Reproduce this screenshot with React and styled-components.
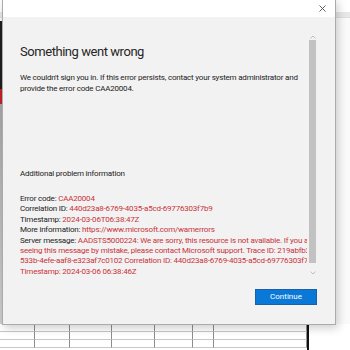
import React from "react";
import styled, { createGlobalStyle } from "styled-components";

const Global = createGlobalStyle`
  html, body { margin: 0; padding: 0; background: #fff; overflow: hidden; }
  * { box-sizing: border-box; }
`;

const Page = styled.div`
  position: relative;
  width: 350px;
  height: 350px;
  overflow: hidden;
  background: #fff;
  font-family: Roboto, "Noto Sans", sans-serif;
`;

const Backdrop = styled.div`
  display: flex;
  flex-direction: column;
  height: 100%;
`;

const Ribbon = styled.div`
  flex: none;
  margin-top: 12px;
  height: 6px;
  background: #e8e8e8;
  border-bottom: 1px solid #dedede;
`;

const Spacer = styled.div`
  flex: 1;
  display: flex;
  background: #fafafa;
`;

const LeftStrip = styled.div`
  width: 2px;
  margin-top: 3px;
  background: linear-gradient(#1e1e1e 0, #1e1e1e 68px, #c8202a 68px, #c8202a 83px, #a8a8a8 83px, #cfcfcf 100%);
`;

const Sheet = styled.div`
  flex: none;
  display: grid;
  grid-template-columns: 35px 35px 42px 43px 38px 21px 93px;
  grid-auto-rows: 8px;
  width: 309px;
  height: 26px;
  border-right: 2px solid #111;
`;

const Cell = styled.div`
  border-right: 1px solid #8d8d8d;
  border-bottom: 1px solid #c8c8c8;
`;

const Dialog = styled.div`
  position: absolute;
  left: 2px;
  top: -1px;
  width: 334px;
  height: 326px;
  display: flex;
  flex-direction: column;
  background: #f2f2f2;
  border: 1px solid #ababab;
  box-shadow: 2px 3px 9px rgba(0, 0, 0, 0.2);
`;

const TitleBar = styled.div`
  flex: none;
  height: 17px;
  background: #fff;
  display: flex;
  justify-content: flex-end;
  align-items: center;
  padding-right: 8px;
`;

const Close = styled.div`
  width: 9px;
  height: 9px;
  display: flex;
  align-items: center;
  justify-content: center;
`;

const Body = styled.div`
  flex: none;
  display: flex;
  margin-top: 16px;
  height: 246px;
`;

const Scroll = styled.div`
  flex: none;
  width: 304px;
  min-width: 0;
  overflow: hidden;
  padding: 11px 0 0 17px;
  white-space: nowrap;
`;

const Title = styled.h1`
  margin: 0;
  font-size: 13px;
  font-weight: 400;
  letter-spacing: -0.45px;
  line-height: 16px;
  color: #262626;
`;

const Para = styled.p`
  margin: ${(p) => p.$mt}px 0 0;
  font-size: 8px;
  letter-spacing: -0.2px;
  line-height: ${(p) => p.$lh || 10.4}px;
  color: #222;
`;

const Red = styled.span`
  color: #c9323a;
`;

const ScrollBar = styled.div`
  flex: none;
  width: 7px;
  margin-left: 2px;
  display: flex;
  flex-direction: column;
  align-items: center;
  padding-bottom: 3px;
`;

const Arrow = styled.div`
  flex: none;
  height: 7px;
  display: flex;
  align-items: center;
  justify-content: center;
`;

const Thumb = styled.div`
  flex: none;
  width: 7px;
  height: 223px;
  background: #c2c2c2;
`;

const Track = styled.div`
  flex: 1;
`;

const Footer = styled.div`
  flex: none;
  display: flex;
  justify-content: flex-end;
  padding: 10px 18px 0 0;
`;

const Button = styled.button`
  flex: none;
  width: 62px;
  height: 16px;
  padding: 0;
  background: #0a78d6;
  border: 1px solid #1a5fa8;
  color: #fff;
  font-family: inherit;
  font-size: 8px;
  line-height: 14px;
`;

const Chevron = ({ up }) => (
  <svg width="6" height="4" viewBox="0 0 6 4">
    <path d={up ? "M0.5 3.5 L3 1 L5.5 3.5" : "M0.5 0.5 L3 3 L5.5 0.5"} fill="none" stroke="#bdbdbd" strokeWidth="1" />
  </svg>
);

export default function App() {
  const cells = Array.from({ length: 21 });
  return (
    <Page>
      <Global />
      <Backdrop>
        <Ribbon />
        <Spacer>
          <LeftStrip />
        </Spacer>
        <Sheet>
          {cells.map((_, i) => (
            <Cell key={i} />
          ))}
        </Sheet>
      </Backdrop>
      <Dialog>
        <TitleBar>
          <Close>
            <svg width="7" height="7" viewBox="0 0 7 7">
              <path d="M0.5 0.5 L6.5 6.5 M6.5 0.5 L0.5 6.5" stroke="#505050" strokeWidth="0.9" />
            </svg>
          </Close>
        </TitleBar>
        <Body>
          <Scroll>
            <Title>Something went wrong</Title>
            <Para $mt={12} $lh={11}>
              We couldn't sign you in. If this error persists, contact your system administrator and
              <br />
              provide the error code CAA20004.
            </Para>
            <Para $mt={75}>Additional problem information</Para>
            <Para $mt={14.5}>
              Error code: <Red>CAA20004</Red>
              <br />
              Correlation ID: <Red>440d23a8-6769-4035-a5cd-69776303f7b9</Red>
              <br />
              Timestamp: <Red>2024-03-06T06:38:47Z</Red>
              <br />
              More information: <Red>https://www.microsoft.com/wamerrors</Red>
              <br />
              Server message: <Red>AADSTS5000224: We are sorry, this resource is not available. If you are</Red>
              <br />
              <Red>seeing this message by mistake, please contact Microsoft support. Trace ID: 219abfb3-</Red>
              <br />
              <Red>533b-4efe-aaf8-e323af7c0102 Correlation ID: 440d23a8-6769-4035-a5cd-69776303f7b9</Red>
              <br />
              <Red>Timestamp: 2024-03-06 06:38:46Z</Red>
            </Para>
          </Scroll>
          <ScrollBar>
            <Arrow>
              <Chevron up />
            </Arrow>
            <Thumb />
            <Track />
            <Arrow>
              <Chevron />
            </Arrow>
          </ScrollBar>
        </Body>
        <Footer>
          <Button>Continue</Button>
        </Footer>
      </Dialog>
    </Page>
  );
}
